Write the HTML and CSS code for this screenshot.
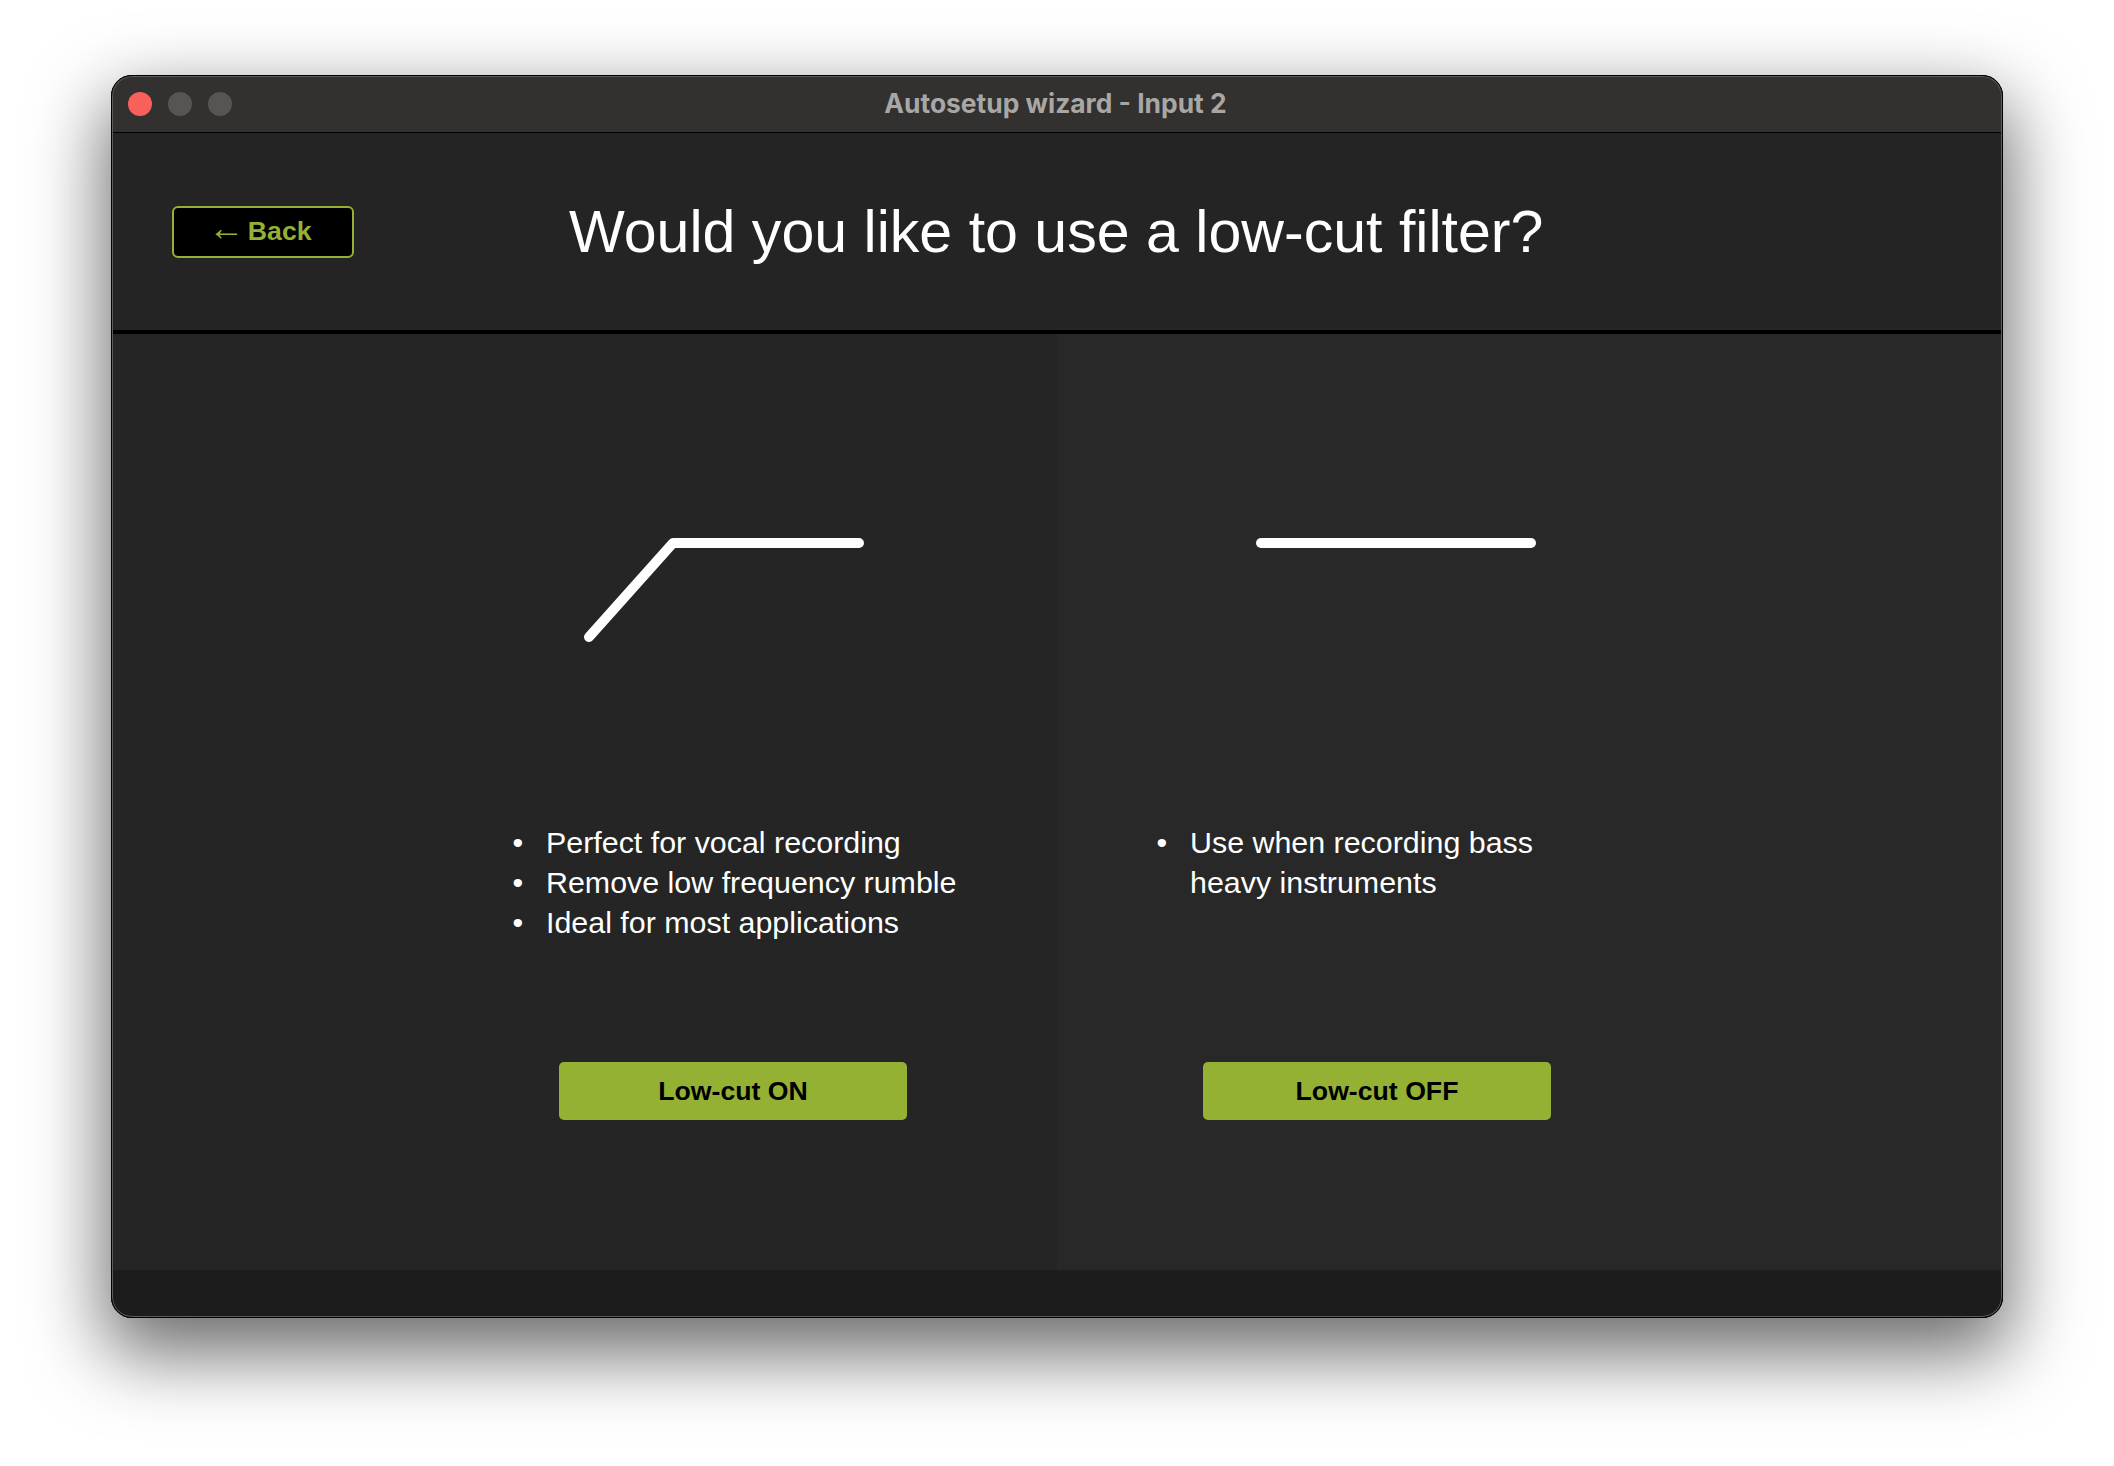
FILE: index.html
```html
<!DOCTYPE html>
<html lang="en">
<head>
<meta charset="utf-8">
<title>Autosetup wizard - Input 2</title>
<link rel="stylesheet" href="styles.css">
</head>
<body>
<div class="window">
  <div class="titlebar">
    <div class="lights">
      <span class="light light-close"></span>
      <span class="light"></span>
      <span class="light"></span>
    </div>
    <div class="window-title">Autosetup wizard - Input 2</div>
  </div>
  <header class="header">
    <button class="back"><span class="back-arrow">←</span> Back</button>
    <h1 class="question">Would you like to use a low-cut filter?</h1>
  </header>
  <main class="options">
    <section class="option option-on">
      <svg class="curve curve-on" width="290" height="110" viewBox="0 0 290 110">
        <path d="M5 99 L89 5 H275" fill="none" stroke="#fff" stroke-width="10" stroke-linecap="round" stroke-linejoin="round"/>
      </svg>
      <ul class="points">
        <li>Perfect for vocal recording</li>
        <li>Remove low frequency rumble</li>
        <li>Ideal for most applications</li>
      </ul>
      <button class="choose">Low-cut ON</button>
    </section>
    <section class="option option-off">
      <svg class="curve curve-off" width="290" height="110" viewBox="0 0 290 110">
        <path d="M5 5 H275" fill="none" stroke="#fff" stroke-width="10" stroke-linecap="round"/>
      </svg>
      <ul class="points">
        <li>Use when recording bass heavy instruments</li>
      </ul>
      <button class="choose">Low-cut OFF</button>
    </section>
  </main>
  <footer class="footer"></footer>
</div>
</body>
</html>
```
FILE: styles.css
```css
* { box-sizing: border-box; }
html, body { margin: 0; height: 100%; }
body {
  background: #fff;
  padding: 75px 111px 0;
  font-family: "Liberation Sans", Arial, sans-serif;
  overflow: hidden;
}
.window {
  position: relative;
  width: 1892px;
  height: 1243px;
  border-radius: 21px;
  background: #252525;
  display: flex;
  flex-direction: column;
  box-shadow: 0 30px 75px 6px rgba(0, 0, 0, .58);
}
.window::after {
  content: "";
  position: absolute;
  inset: 0;
  border-radius: 21px;
  border: 1px solid #000;
  box-shadow: inset 0 0 0 1px #5c5c5c;
  pointer-events: none;
}
.titlebar {
  height: 58px;
  flex: none;
  background: #32312f;
  border-bottom: 1px solid #000;
  border-radius: 21px 21px 0 0;
  display: flex;
  align-items: center;
}
.lights { display: flex; gap: 16px; padding-left: 17px; }
.light { width: 24px; height: 24px; border-radius: 50%; background: #565553; }
.light-close { background: #f9605a; }
.window-title {
  flex: 1;
  text-align: center;
  margin: -2px 0 0 -124px;
  font: 700 26.4px Inter, "Liberation Sans", sans-serif;
  color: #a8a7a5;
}
.header {
  height: 201px;
  flex: none;
  background: #242424;
  border-bottom: 4px solid #000;
  display: flex;
  align-items: center;
  padding-left: 61px;
}
.back {
  width: 182px;
  height: 52px;
  flex: none;
  background: #000;
  border: 2px solid #94b134;
  border-radius: 6px;
  color: #94b134;
  font: 700 26.67px "Liberation Sans", Arial, sans-serif;
  word-spacing: -4px;
  padding: 0 6px 0 0;
}
.back-arrow { font-weight: 400; font-size: 36px; line-height: 0; }
.question {
  margin: 0 0 0 215px;
  font: 400 59.1px "Liberation Sans", Arial, sans-serif;
  color: #fff;
}
.options { flex: 1; display: grid; grid-template-columns: 946px 1fr; }
.option { display: flex; flex-direction: column; align-items: flex-start; }
.option-on { background: #252525; padding-left: 406px; }
.option-off { background: #282828; padding-left: 105px; }
.curve { display: block; margin-top: 204px; }
.curve-on { margin-left: 67px; }
.curve-off { margin-left: 94px; }
.points {
  margin: 174px 0 0;
  padding: 0 0 0 29px;
  height: 180px;
  width: 440px;
  font-size: 30.4px;
  line-height: 40px;
  color: #fff;
}
.option-off .points { width: 399px; margin-left: -1px; }
.points li::marker { content: "•\00a0\00a0\2009"; }
.choose {
  margin: 60px 0 0 42px;
  width: 348px;
  height: 58px;
  background: #94b134;
  border: 0;
  border-radius: 5px;
  color: #000;
  font: 700 26.67px "Liberation Sans", Arial, sans-serif;
  padding: 0;
}
.option-off .choose { margin-left: 41px; }
.footer {
  height: 48px;
  flex: none;
  background: #1c1c1c;
  border-radius: 0 0 21px 21px;
}
```
